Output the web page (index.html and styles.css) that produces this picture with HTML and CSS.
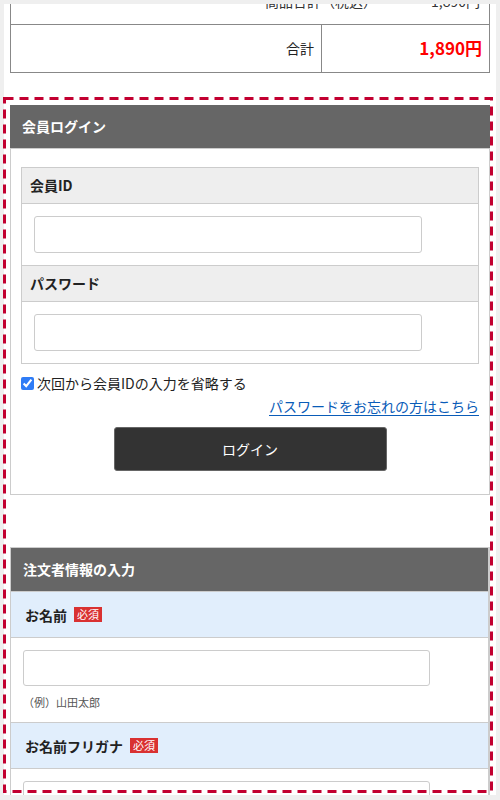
FILE: index.html
```html
<!DOCTYPE html>
<html lang="ja">
<head>
<meta charset="utf-8">
<title>会員ログイン</title>
<link rel="stylesheet" href="styles.css">
</head>
<body>
<div class="frame">
  <div class="content">
    <div class="total">
      <div class="total-row total-row-top">
        <span class="sub-label">商品合計（税込）</span>
        <span class="sub-value">1,890円</span>
      </div>
      <div class="total-row total-row-sum">
        <div class="sum-label">合計</div>
        <div class="sum-value">1,890円</div>
      </div>
    </div>

    <section class="login">
      <h2 class="panel-head">会員ログイン</h2>
      <div class="login-body">
        <div class="form-table">
          <div class="ft-head">会員ID</div>
          <div class="ft-cell"><input class="text-input" type="text"></div>
          <div class="ft-head">パスワード</div>
          <div class="ft-cell"><input class="text-input" type="password"></div>
        </div>
        <label class="remember"><input class="check" type="checkbox" checked>次回から会員IDの入力を省略する</label>
        <div class="forgot"><a href="#">パスワードをお忘れの方はこちら</a></div>
        <button class="login-btn" type="button">ログイン</button>
      </div>
    </section>

    <section class="order">
      <h2 class="order-head">注文者情報の入力</h2>
      <div class="field-head">お名前<span class="req">必須</span></div>
      <div class="field-cell">
        <input class="name-input" type="text">
        <div class="example">（例）山田太郎</div>
      </div>
      <div class="field-head">お名前フリガナ<span class="req">必須</span></div>
      <div class="field-cell">
        <input class="name-input" type="text">
      </div>
    </section>
  </div>
</div>
<svg class="highlight" width="490" height="696" viewBox="0 0 490 696" aria-hidden="true">
  <rect x="1.5" y="1.5" width="487" height="693" fill="none" stroke="#c20030" stroke-width="3" stroke-dasharray="9 6"/>
</svg>
</body>
</html>
```

FILE: styles.css
```css
* { box-sizing: border-box; }
html, body { margin: 0; padding: 0; }
body {
  position: relative;
  background: #efefef;
  padding: 4px 4px 0;
  height: 800px;
  overflow: hidden;
  font-family: "Noto Sans CJK JP", "Liberation Sans", sans-serif;
  color: #222;
  font-size: 14px;
}
.frame {
  width: 492px;
  height: 791px;
  background: #fff;
  overflow: hidden;
}
.content {
  padding: 0 6px;
}

/* totals table */
.total {
  margin-top: -21px;
  width: 480px;
  border: 1px solid #888;
  border-top: none;
}
.total-row-top {
  height: 42px;
  border-bottom: 1px solid #888;
  display: flex;
  justify-content: flex-end;
  align-items: flex-end;
  padding: 0 9px 15px 0;
  line-height: 16px;
  color: #333;
}
.sub-label { margin-right: 54px; }
.total-row-sum {
  display: flex;
  height: 47px;
}
.sum-label {
  width: 310px;
  text-align: right;
  padding-right: 7px;
  line-height: 47px;
  color: #222;
}
.sum-value {
  flex: 1;
  border-left: 1px solid #888;
  text-align: right;
  padding-right: 7px;
  line-height: 46px;
  color: #ff0000;
  font-weight: bold;
  font-size: 17px;
}

/* login panel */
.login { margin-top: 32px; width: 480px; }
.panel-head {
  margin: 0;
  height: 43px;
  background: #666;
  color: #fff;
  font-size: 14px;
  font-weight: bold;
  line-height: 42px;
  padding-left: 12px;
}
.login-body {
  border: 1px solid #ccc;
  padding: 18px 10px 23px;
}
.form-table {
  border: 1px solid #ccc;
}
.ft-head {
  height: 36px;
  background: #eee;
  border-bottom: 1px solid #ccc;
  font-weight: bold;
  line-height: 35px;
  padding-left: 8px;
}
.ft-cell {
  padding: 12px;
  border-bottom: 1px solid #ccc;
}
.ft-cell:last-child { border-bottom: none; }
.text-input {
  display: block;
  width: 388px;
  height: 37px;
  margin: 0;
  border: 1px solid #ccc;
  border-radius: 3px;
  background: #fff;
}
.remember {
  display: flex;
  align-items: center;
  margin-top: 9px;
  line-height: 20px;
  color: #222;
}
.check {
  width: 13px;
  height: 13px;
  margin: 1px 3px 0 0;
  accent-color: #2f7cf6;
}
.forgot {
  text-align: right;
  line-height: 20px;
  margin-top: 3px;
}
.forgot a {
  color: #0a5cb8;
  text-decoration: underline;
  text-underline-offset: 3px;
}
.login-btn {
  display: block;
  margin: 11px auto 0;
  width: 273px;
  height: 44px;
  background: #333;
  border: 1px solid #666;
  border-radius: 3px;
  color: #fff;
  font-family: inherit;
  font-size: 14px;
}

/* order panel */
.order {
  margin-top: 52px;
  width: 480px;
  border: 1px solid #ccc;
  border-right-width: 2px;
}
.order-head {
  margin: 0;
  height: 44px;
  background: #666;
  color: #fff;
  font-size: 14px;
  font-weight: bold;
  line-height: 43px;
  padding-left: 12px;
  border-bottom: 1px solid #ccc;
}
.field-head {
  height: 46px;
  background: #e1eefc;
  border-bottom: 1px solid #ccc;
  font-weight: bold;
  padding-left: 14px;
  display: flex;
  align-items: center;
}
.req {
  display: inline-block;
  margin-left: 7px;
  background: #d93131;
  color: #fff;
  font-size: 11px;
  font-weight: normal;
  line-height: 15px;
  height: 15px;
  padding: 0 3px;
}
.field-cell {
  padding: 12px;
  border-bottom: 1px solid #ccc;
}
.name-input {
  display: block;
  width: 407px;
  height: 36px;
  margin: 0;
  border: 1px solid #ccc;
  border-radius: 3px;
  background: #fff;
}
.example {
  margin-top: 8px;
  font-size: 11px;
  line-height: 16px;
  color: #555;
}

/* viewport highlight overlay */
.highlight {
  position: absolute;
  left: 3px;
  top: 97px;
  pointer-events: none;
}
```
